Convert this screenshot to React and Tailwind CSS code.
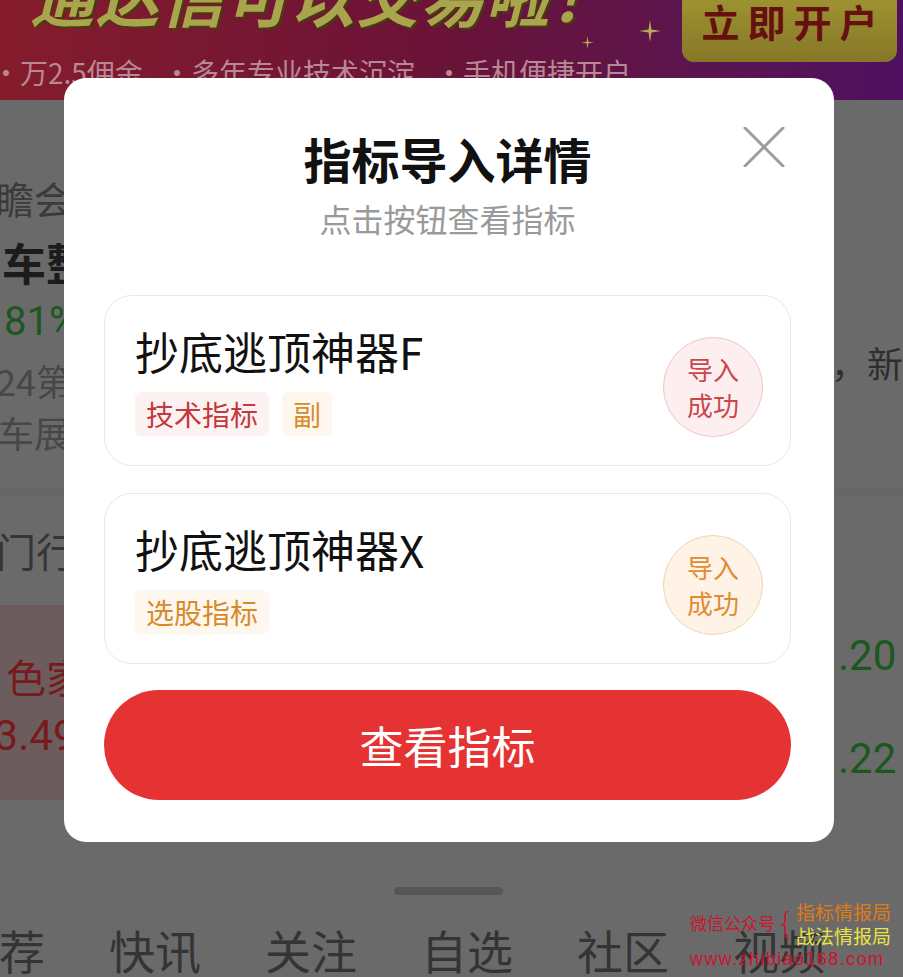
import React from "react";

const F = { fontFamily: '"Noto Sans CJK SC", "Noto Sans", sans-serif' };

function Star({ size, className }) {
  return (
    <svg width={size} height={size} viewBox="0 0 20 20" className={className}>
      <path d="M10 0 L11.3 8.7 L20 10 L11.3 11.3 L10 20 L8.7 11.3 L0 10 L8.7 8.7 Z" fill="#b8aa58" />
    </svg>
  );
}

function Banner() {
  return (
    <div className="relative h-[100px] overflow-hidden bg-gradient-to-r from-[#851c2b] via-[#6a1238] to-[#4f0f60] flex justify-between">
      <div className="flex flex-col pl-[30px]">
        <div className="mt-[-38px] text-[64px] leading-[64px] font-bold italic text-[#a8a54c] tracking-[1px] whitespace-nowrap [text-shadow:2px_2px_0_#4a3a10]">
          通达信可以交易啦！
        </div>
        <div className="ml-[-38px] mt-[-8px] pt-[36px] flex gap-[20px] text-[28px] leading-[36px] text-[#b88894] whitespace-nowrap">
          <span>·万2.5佣金</span>
          <span>·多年专业技术沉淀</span>
          <span>·手机便捷开户</span>
        </div>
      </div>
      <Star size={22} className="absolute left-[639px] top-[20px]" />
      <Star size={13} className="absolute left-[581px] top-[36px]" />
      <div className="mr-[6px] w-[215px] h-[62px] rounded-b-[12px] bg-gradient-to-b from-[#9d9232] to-[#867727] flex items-center justify-center">
        <span className="text-[38px] leading-[44px] font-bold text-[#661010] tracking-[8px] mt-[-20px] ml-[8px]">立即开户</span>
      </div>
    </div>
  );
}

function Background() {
  return (
    <div className="flex flex-col w-[903px] h-[977px] bg-[#6a6a6a]">
      <Banner />
      {/* section 1 */}
      <div className="flex flex-col pt-[75px] pb-[35px] h-[387px]">
        <div className="h-[44px] flex items-center ml-[-4px] text-[38px] text-[#3a3a3a] whitespace-nowrap">瞻会议召开</div>
        <div className="mt-[21px] h-[44px] flex items-center ml-[2px] text-[44px] font-bold text-[#1c1c1c] whitespace-nowrap">车整体销量</div>
        <div className="mt-[18px] h-[40px] flex items-center ml-[4px] text-[40px] text-[#1b581e] whitespace-nowrap" style={{ fontFamily: '"Roboto", sans-serif' }}>81%</div>
        <div className="h-[58px] flex justify-between text-[36px] text-[#474747] whitespace-nowrap">
          <span className="self-end leading-[40px] ml-[-4px]">24第二十届</span>
          <span className="self-start leading-[40px] text-[#2e2e2e]">，新</span>
        </div>
        <div className="mt-[12px] h-[40px] flex items-center ml-[-2px] text-[36px] text-[#474747] whitespace-nowrap">车展上</div>
      </div>
      <div className="h-[10px] bg-[#666666]" />
      {/* section 2 */}
      <div className="pt-[33px] h-[108px]">
        <div className="h-[40px] flex items-center ml-[-44px] text-[40px] text-[#353535] whitespace-nowrap">热门行业</div>
      </div>
      <div className="flex justify-between h-[195px]">
        <div className="w-[520px] bg-[#6c5c5e] flex flex-col pt-[51px]">
          <div className="h-[40px] flex items-center ml-[6px] text-[40px] text-[#761a1c] whitespace-nowrap">色家电</div>
          <div className="mt-[19px] h-[40px] flex items-center ml-[-29px] text-[42px] text-[#761a1c] whitespace-nowrap" style={{ fontFamily: '"Roboto", sans-serif' }}>13.49%</div>
        </div>
        <div className="w-[65px] flex flex-col pt-[30px] text-[42px] text-[#1b581e] overflow-hidden" style={{ fontFamily: '"Roboto", sans-serif' }}>
          <div className="h-[40px] flex items-center whitespace-nowrap">.20</div>
          <div className="mt-[63px] h-[40px] flex items-center whitespace-nowrap">.22</div>
        </div>
      </div>
      <div className="mt-[87px] flex justify-center">
        <div className="w-[109px] h-[8px] rounded-full bg-[#565656] ml-[-6px]" />
      </div>
      <div className="mt-[29px] h-[50px] flex items-center gap-[64px] ml-[-47px] text-[46px] leading-[50px] text-[#343434] whitespace-nowrap">
        <span>推荐</span>
        <span>快讯</span>
        <span>关注</span>
        <span>自选</span>
        <span>社区</span>
        <span>视频</span>
      </div>
    </div>
  );
}

function Card({ title, tags, tone }) {
  const red = tone === "red";
  return (
    <div className="h-[171px] rounded-[28px] border-[1.5px] border-[#e8e8e8] flex items-center justify-between pl-[30px] pr-[27px]">
      <div className="flex flex-col">
        <div className="text-[44px] leading-[50px] text-[#111111] whitespace-nowrap">{title}</div>
        <div className="mt-[16px] flex gap-[13px]">
          {tags.map((t) => (
            <span
              key={t.label}
              className={
                t.tone === "red"
                  ? "h-[44px] px-[11px] rounded-[6px] bg-[#fdf2f2] text-[#c4393c] text-[28px] leading-[44px]"
                  : "h-[44px] px-[11px] rounded-[6px] bg-[#fef7ee] text-[#d88a2c] text-[28px] leading-[44px]"
              }
            >
              {t.label}
            </span>
          ))}
        </div>
      </div>
      <div
        className={
          red
            ? "mt-[12px] w-[100px] h-[100px] rounded-full border-[1.5px] border-[#efc6c8] bg-[#fdeff0] text-[#c9474b] flex flex-col items-center justify-center text-[26px] leading-[36px]"
            : "mt-[12px] w-[100px] h-[100px] rounded-full border-[1.5px] border-[#f0d5b3] bg-[#fef3e6] text-[#e08b35] flex flex-col items-center justify-center text-[26px] leading-[36px]"
        }
      >
        <span>导入</span>
        <span>成功</span>
      </div>
    </div>
  );
}

function Modal() {
  return (
    <div className="absolute left-[64px] top-[78px] w-[770px] h-[764px] rounded-[22px] bg-white flex flex-col pl-[40px] pr-[43px]">
      <button className="absolute left-[679px] top-[49px] w-[42px] h-[40px]">
        <svg width="42" height="40" viewBox="0 0 42 40">
          <path d="M2 1 L40 39 M40 1 L2 39" stroke="#9c9c9c" strokeWidth="3" strokeLinecap="round" fill="none" />
        </svg>
      </button>
      <div className="pt-[52px] text-center text-[48px] leading-[56px] font-bold text-[#111111]">指标导入详情</div>
      <div className="mt-[12px] text-center text-[32px] leading-[40px] text-[#9a9a9a]">点击按钮查看指标</div>
      <div className="mt-[57px]">
        <Card
          title="抄底逃顶神器F"
          tone="red"
          tags={[
            { label: "技术指标", tone: "red" },
            { label: "副", tone: "orange" },
          ]}
        />
      </div>
      <div className="mt-[27px]">
        <Card title="抄底逃顶神器X" tone="orange" tags={[{ label: "选股指标", tone: "orange" }]} />
      </div>
      <button className="mt-[26px] h-[110px] rounded-full bg-[#e53333] text-white text-[44px] leading-[50px] flex items-center justify-center">
        查看指标
      </button>
    </div>
  );
}

function Watermark() {
  return (
    <div className="absolute left-[690px] top-[900px] flex flex-col">
      <div className="flex items-center">
        <span className="text-[17px] leading-[20px] text-[#d0122e] mt-[-2px]">微信公众号</span>
        <span className="text-[30px] leading-[40px] text-[#d0122e] mx-[1px] font-light" style={{ fontFamily: '"DejaVu Sans", sans-serif' }}>{"{"}</span>
        <div className="flex flex-col">
          <span className="text-[19px] leading-[24px] text-[#e27a12]">指标情报局</span>
          <span className="text-[19px] leading-[24px] text-[#e9e443]">战法情报局</span>
        </div>
      </div>
      <span className="mt-[1px] text-[18px] leading-[20px] text-[#d0122e] tracking-[1.4px]" style={{ fontFamily: '"Liberation Sans", sans-serif' }}>www.zhibiao168.com</span>
    </div>
  );
}

export default function App() {
  return (
    <div className="relative w-[903px] h-[977px] overflow-hidden" style={F}>
      <Background />
      <Modal />
      <Watermark />
    </div>
  );
}
